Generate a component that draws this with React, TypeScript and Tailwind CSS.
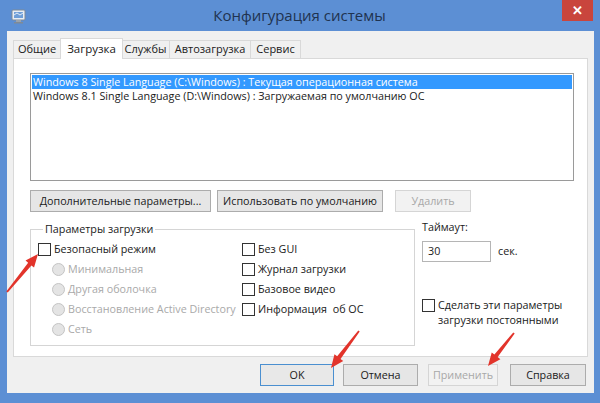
import React from "react";

const font = { fontFamily: '"Open Sans", "Noto Sans", sans-serif' };

function Arrow({ x1, y1, x2, y2 }: { x1: number; y1: number; x2: number; y2: number }) {
  const dx = x2 - x1;
  const dy = y2 - y1;
  const len = Math.hypot(dx, dy);
  const ux = dx / len;
  const uy = dy / len;
  const px = -uy;
  const py = ux;
  const headLen = 13;
  const headW = 5.5;
  const bx = x2 - ux * headLen;
  const by = y2 - uy * headLen;
  const tailW = 0.9;
  const neckW = 2.1;
  const pts = [
    [x1 + px * tailW, y1 + py * tailW],
    [bx + px * neckW, by + py * neckW],
    [bx + px * headW, by + py * headW],
    [x2, y2],
    [bx - px * headW, by - py * headW],
    [bx - px * neckW, by - py * neckW],
    [x1 - px * tailW, y1 - py * tailW],
  ]
    .map((p) => p.join(","))
    .join(" ");
  return <polygon points={pts} fill="#e2342b" />;
}

function Checkbox() {
  return <span className="inline-block w-[13px] h-[13px] border border-[#333] bg-white shrink-0" />;
}

function Radio() {
  return (
    <span className="inline-block w-[13px] h-[13px] rounded-full border border-[#c4c4c4] bg-[#e4e4e4] shrink-0" />
  );
}

function Btn({
  children,
  className = "",
  disabled = false,
  focused = false,
}: {
  children: React.ReactNode;
  className?: string;
  disabled?: boolean;
  focused?: boolean;
}) {
  return (
    <div
      className={
        "h-[22px] flex items-center justify-center border " +
        (disabled
          ? "border-[#d5d5d5] bg-[#f2f2f2] text-[#a8a8a8] "
          : focused
          ? "border-[#4a8fd0] bg-[#e8e8e8] text-[#1a1a1a] "
          : "border-[#acacac] bg-[#e6e6e6] text-[#1a1a1a] ") +
        className
      }
    >
      {children}
    </div>
  );
}

export default function App() {
  const tabs = [
    { label: "Общие", w: "w-[48px]" },
    { label: "Загрузка", w: "w-[63px]", active: true },
    { label: "Службы", w: "w-[49px]" },
    { label: "Автозагрузка", w: "w-[82px]" },
    { label: "Сервис", w: "w-[51px]" },
  ];
  return (
    <div className="relative w-[600px] h-[403px] bg-[#5c8fd4] flex flex-col overflow-hidden" style={font}>
      {/* Title bar */}
      <div className="h-[31px] flex items-start shrink-0">
        <div className="w-[31px] h-[31px] flex items-center justify-end pr-[5px] pt-[1px]">
          <svg width="15" height="15" viewBox="0 0 15 15">
            <rect x="1" y="1" width="13" height="10" rx="1" fill="#e8eef5" stroke="#7f8a96" />
            <rect x="3" y="3" width="9" height="6" fill="#6f9fd8" />
            <path d="M3 6 L6 4 L9 6 L12 4" stroke="#ffffff" strokeWidth="0.8" fill="none" />
            <rect x="5" y="11" width="5" height="2" fill="#9aa3ad" />
            <rect x="3" y="13" width="9" height="1.5" fill="#7f8a96" />
          </svg>
        </div>
        <div className="flex-1 h-[31px] flex items-center justify-center text-[15px] text-[#1f3350] pl-[6px]">
          Конфигурация системы
        </div>
        <div className="w-[31px] h-[21px] bg-[#c9453d] flex items-center justify-center mr-[7px] text-white text-[13px] font-bold leading-none">
          ✕
        </div>
      </div>

      {/* Client */}
      <div className="ml-[7px] mr-[6px] h-[362px] bg-[#f0f0f0] flex flex-col px-[6px] pt-[7px] text-[10.75px] text-[#1a1a1a]">
        {/* Tabs */}
        <div className="flex items-end h-[20px]">
          {tabs.map((t) =>
            t.active ? (
              <div
                key={t.label}
                className={
                  "relative z-10 h-[21px] -mb-[1px] -mx-[1px] bg-white border border-b-0 border-[#d9d9d9] flex items-start justify-center pt-[1px] text-[11.5px] " +
                  t.w
                }
              >
                {t.label}
              </div>
            ) : (
              <div
                key={t.label}
                className={
                  "h-[18px] bg-[#f0f0f0] border border-b-0 border-[#d9d9d9] flex items-center justify-center -ml-[1px] first:ml-0 text-[11px] " +
                  t.w
                }
              >
                {t.label}
              </div>
            )
          )}
        </div>

        {/* Panel */}
        <div className="h-[299px] border border-[#d9d9d9] bg-white pl-[16px] pr-[13px] pt-[14px] flex flex-col">
          {/* List */}
          <div className="h-[108px] border border-[#9a9a9a] bg-white p-[1px] flex flex-col">
            <div className="h-[14px] bg-[#3399ff] text-white flex items-center pl-[1px] leading-none">
              Windows 8 Single Language (C:\Windows) : Текущая операционная система
            </div>
            <div className="h-[15px] flex items-center pl-[1px] leading-none">
              Windows 8.1 Single Language (D:\Windows) : Загружаемая по умолчанию ОС
            </div>
          </div>

          {/* Buttons row */}
          <div className="flex mt-[9px]">
            <Btn className="w-[181px]">Дополнительные параметры...</Btn>
            <Btn className="w-[166px] ml-[6px]">Использовать по умолчанию</Btn>
            <Btn className="w-[76px] ml-[12px]" disabled>
              Удалить
            </Btn>
          </div>

          {/* Lower area */}
          <div className="flex mt-[9px]">
            <fieldset className="w-[385px] h-[125px] border border-[#d5d5d5] pl-[7px] pr-[6px] pt-[2px]">
              <legend className="ml-[5px] px-[2px] leading-[16px] text-[#1a1a1a]">Параметры загрузки</legend>
              <div className="flex">
                <div className="w-[204px] flex flex-col">
                  <div className="h-[20px] flex items-center gap-[3px]">
                    <Checkbox />
                    <span>Безопасный режим</span>
                  </div>
                  {["Минимальная", "Другая оболочка", "Восстановление Active Directory", "Сеть"].map((r) => (
                    <div key={r} className="h-[20px] flex items-center gap-[3px] pl-[14px] text-[#a9a9a9]">
                      <Radio />
                      <span>{r}</span>
                    </div>
                  ))}
                </div>
                <div className="flex flex-col">
                  {["Без GUI", "Журнал загрузки", "Базовое видео", "Информация  об ОС"].map((r) => (
                    <div key={r} className="h-[20px] flex items-center gap-[3px]">
                      <Checkbox />
                      <span className="whitespace-pre">{r}</span>
                    </div>
                  ))}
                </div>
              </div>
            </fieldset>

            <div className="ml-[7px] flex flex-col">
              <div className="h-[16px] leading-[16px] mt-[-2px]">Таймаут:</div>
              <div className="flex items-center mt-[6px]">
                <div className="w-[69px] h-[21px] border border-[#b5b5b5] bg-white flex items-center pl-[5px]">30</div>
                <span className="ml-[7px]">сек.</span>
              </div>
              <div className="flex items-start gap-[3px] mt-[36px]">
                <span className="mt-[1px]">
                  <Checkbox />
                </span>
                <span className="leading-[15px]">
                  Сделать эти параметры
                  <br />
                  загрузки постоянными
                </span>
              </div>
            </div>
          </div>
        </div>

        {/* Bottom buttons */}
        <div className="flex justify-end mt-[7px] pr-[2px]">
          <Btn className="w-[74px]" focused>
            OK
          </Btn>
          <Btn className="w-[75px] ml-[9px]">Отмена</Btn>
          <Btn className="w-[70px] ml-[10px]" disabled>
            Применить
          </Btn>
          <Btn className="w-[76px] ml-[12px]">Справка</Btn>
        </div>
      </div>

      {/* Red arrows overlay */}
      <svg className="absolute inset-0 pointer-events-none" width="600" height="403">
        <Arrow x1={7} y1={292} x2={38} y2={254} />
        <Arrow x1={359} y1={331} x2={331} y2={368} />
        <Arrow x1={514} y1={333} x2={488} y2={366} />
      </svg>
    </div>
  );
}
